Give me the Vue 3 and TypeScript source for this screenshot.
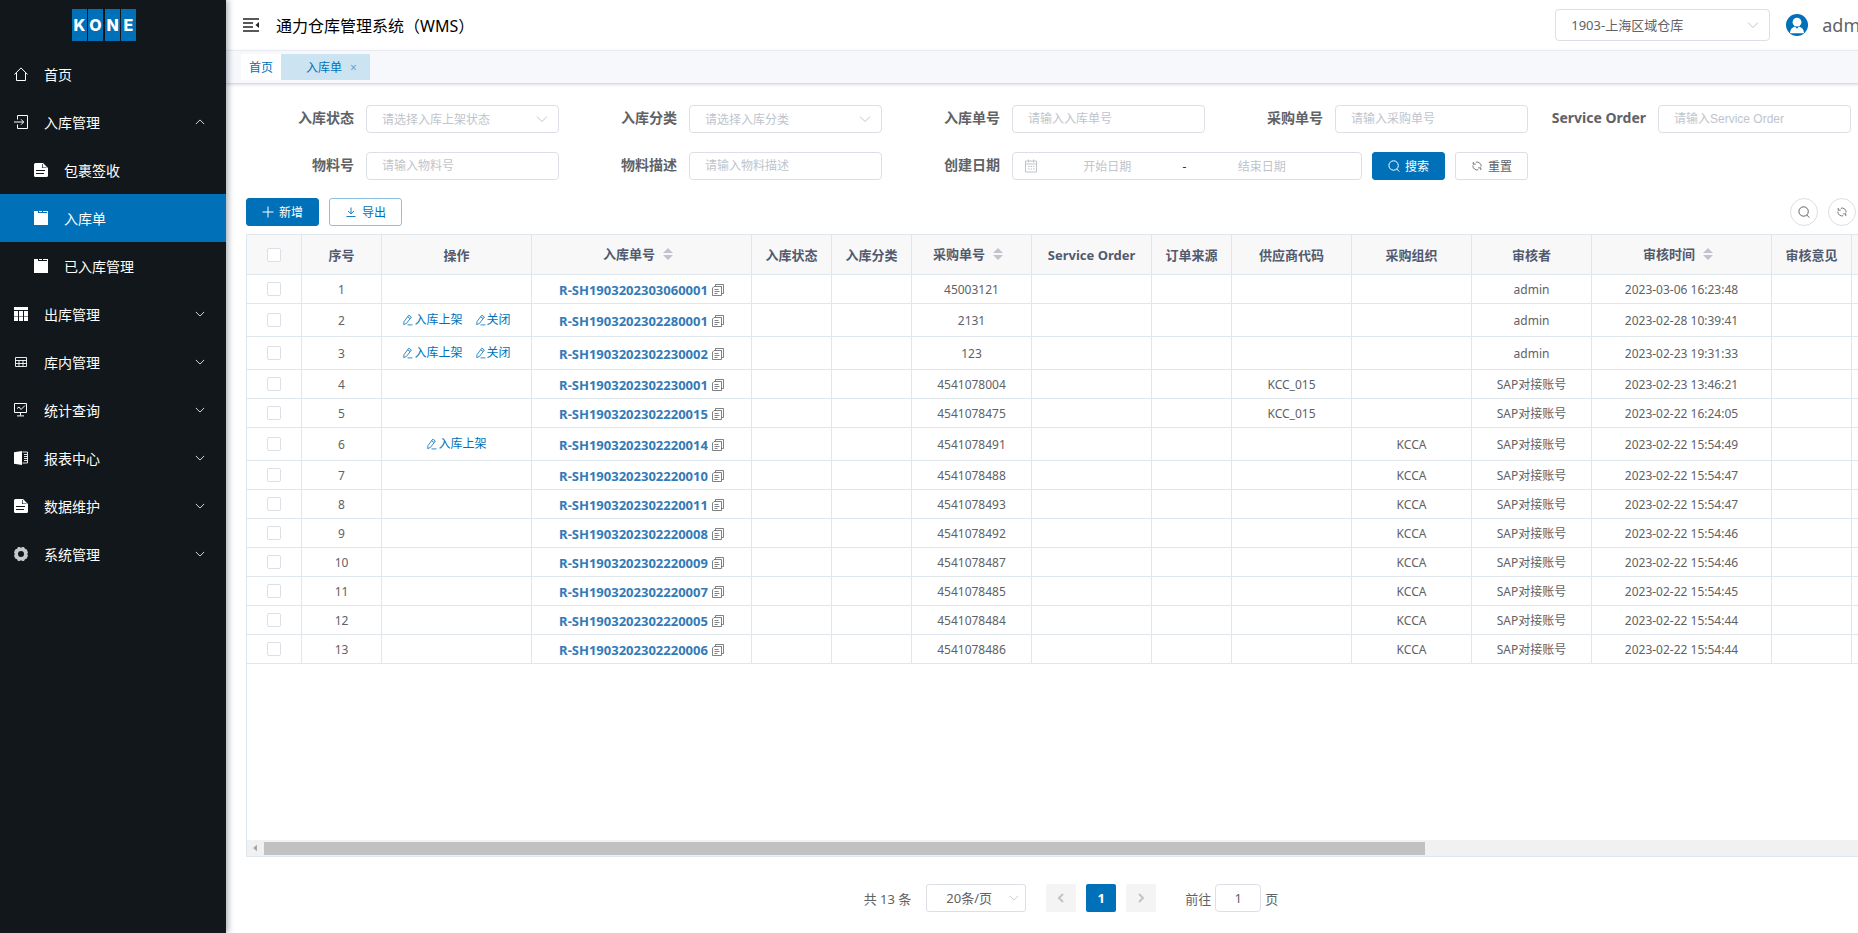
<script setup lang="ts">
import { ref } from 'vue'

interface Row {
  id: number
  actions: string[]
  receipt: string
  purchase: string
  supplier: string
  org: string
  auditor: string
  time: string
}

interface Column {
  label: string
  width: number
  sortable?: boolean
}

const sap = 'SAP对接账号'

const makeRow = (
  id: number, receipt: string, purchase: string, time: string,
  auditor: string, org = '', supplier = '', actions: string[] = []
): Row => ({ id, actions, receipt, purchase, supplier, org, auditor, time })

const rows: Row[] = [
  makeRow(1, 'R-SH1903202303060001', '45003121', '2023-03-06 16:23:48', 'admin'),
  makeRow(2, 'R-SH1903202302280001', '2131', '2023-02-28 10:39:41', 'admin', '', '', ['入库上架', '关闭']),
  makeRow(3, 'R-SH1903202302230002', '123', '2023-02-23 19:31:33', 'admin', '', '', ['入库上架', '关闭']),
  makeRow(4, 'R-SH1903202302230001', '4541078004', '2023-02-23 13:46:21', sap, '', 'KCC_015'),
  makeRow(5, 'R-SH1903202302220015', '4541078475', '2023-02-22 16:24:05', sap, '', 'KCC_015'),
  makeRow(6, 'R-SH1903202302220014', '4541078491', '2023-02-22 15:54:49', sap, 'KCCA', '', ['入库上架']),
  makeRow(7, 'R-SH1903202302220010', '4541078488', '2023-02-22 15:54:47', sap, 'KCCA'),
  makeRow(8, 'R-SH1903202302220011', '4541078493', '2023-02-22 15:54:47', sap, 'KCCA'),
  makeRow(9, 'R-SH1903202302220008', '4541078492', '2023-02-22 15:54:46', sap, 'KCCA'),
  makeRow(10, 'R-SH1903202302220009', '4541078487', '2023-02-22 15:54:46', sap, 'KCCA'),
  makeRow(11, 'R-SH1903202302220007', '4541078485', '2023-02-22 15:54:45', sap, 'KCCA'),
  makeRow(12, 'R-SH1903202302220005', '4541078484', '2023-02-22 15:54:44', sap, 'KCCA'),
  makeRow(13, 'R-SH1903202302220006', '4541078486', '2023-02-22 15:54:44', sap, 'KCCA')
]

const columns: Column[] = [
  { label: '序号', width: 80 },
  { label: '操作', width: 150 },
  { label: '入库单号', width: 220, sortable: true },
  { label: '入库状态', width: 80 },
  { label: '入库分类', width: 80 },
  { label: '采购单号', width: 120, sortable: true },
  { label: 'Service Order', width: 120 },
  { label: '订单来源', width: 80 },
  { label: '供应商代码', width: 120 },
  { label: '采购组织', width: 120 },
  { label: '审核者', width: 120 },
  { label: '审核时间', width: 180, sortable: true },
  { label: '审核意见', width: 80 },
  { label: '', width: 120 }
]

const filters = [
  { id: 'status', label: '入库状态', hint: '请选择入库上架状态', select: true },
  { id: 'category', label: '入库分类', hint: '请选择入库分类', select: true },
  { id: 'receipt', label: '入库单号', hint: '请输入入库单号', select: false },
  { id: 'purchase', label: '采购单号', hint: '请输入采购单号', select: false },
  { id: 'service', label: 'Service Order', hint: '请输入Service Order', select: false },
  { id: 'material', label: '物料号', hint: '请输入物料号', select: false },
  { id: 'description', label: '物料描述', hint: '请输入物料描述', select: false }
]

const children = [
  { label: '包裹签收', icon: 'document' },
  { label: '入库单', icon: 'board' },
  { label: '已入库管理', icon: 'board' }
]

const groups = [
  { label: '出库管理', icon: 'grid' },
  { label: '库内管理', icon: 'sheet' },
  { label: '统计查询', icon: 'chart' },
  { label: '报表中心', icon: 'book' },
  { label: '数据维护', icon: 'document' },
  { label: '系统管理', icon: 'gear' }
]

const activeChild = ref('入库单')
const inboundOpen = ref(true)
const selected = ref<number[]>([])
const jumpPage = ref('1')

function toggleAll(event: Event): void {
  selected.value = (event.target as HTMLInputElement).checked ? rows.map((r) => r.id) : []
}
</script>

<template>
  <svg class="sprite" aria-hidden="true">
    <symbol id="home" viewBox="0 0 14 14"><path d="M.4 7.500 7 .9l6.600 6.600M2.500 6v7.500h9V6" fill="none" stroke="currentColor" /></symbol>
    <symbol id="enter" viewBox="0 0 14 14"><path d="M3.500 4.500v-4h10v13h-10v-4M0 7h9.500M7 4.300 9.700 7 7 9.700" fill="none" stroke="currentColor" /></symbol>
    <symbol id="document" viewBox="0 0 14 14">
      <path fill-rule="evenodd" d="M1.500 0H9l5 5v7.500a1.500 1.500 0 0 1-1.500 1.500h-11A1.500 1.500 0 0 1 0 12.500v-11A1.500 1.500 0 0 1 1.500 0zM8 1v4h4.500v-.6H8.700V1zM2 7v1h9V7zM2 10v1h8v-1z" fill="currentColor" />
    </symbol>
    <symbol id="board" viewBox="0 0 14 14"><path d="M0 0h4v2h10v12H0zM5 0h3v1H5zM9 0h4v1H9zM13 0h1v3h-1z" fill="currentColor" /></symbol>
    <symbol id="grid" viewBox="0 0 14 14"><path d="M0 0h14v3H0zM0 4h4v5H0zM5 4h4v5H5zM10 4h4v5h-4zM0 9.500h4V14H0zM5 9.500h4V14H5zM10 9.500h4V14h-4z" fill="currentColor" /></symbol>
    <symbol id="sheet" viewBox="0 0 14 14"><path d="M1.500 2.500h11v9h-11zM1.500 5.500h11M1.500 8.500h11M5 5.500v6M9 5.500v6" fill="none" stroke="currentColor" stroke-width=".9" /></symbol>
    <symbol id="chart" viewBox="0 0 14 14"><path d="M.5.5h12v9H.5zM6.500 9.500v3M3 12.900h7M3 5.500 5 4l2 2.500 4-4" fill="none" stroke="currentColor" /></symbol>
    <symbol id="book" viewBox="0 0 14 14"><path d="M0 1.200 8 0v14L0 12.800z" fill="currentColor" /><path d="M8.500 1h5v11h-5M10 3.500h3.500M10 5.500h3.500M10 7.500h3.500M10 9.500h3.500" fill="none" stroke="currentColor" stroke-width=".9" /></symbol>
    <symbol id="gear" viewBox="0 0 14 14"><path fill-rule="evenodd" d="M4 0h1.500L7 .8 8.500 0H10l1 1.800 1.800.6L14 5.500 13.200 7l.8 1.500-1.200 3.100-1.800.6L10 14H8.500L7 13.200 5.500 14H4l-1-1.800-1.800-.6L0 8.500.8 7 0 5.500l1.200-3.100L3 1.800zM7 4a3 3 0 1 0 0 6 3 3 0 0 0 0-6z" fill="#c6c8c9" /></symbol>
    <symbol id="chevron" viewBox="0 0 12 12"><path d="M1 3.500 6 8.500l5-5" fill="none" stroke="currentColor" /></symbol>
    <symbol id="fold" viewBox="0 0 16 14"><path d="M0 1h16M0 5h10M0 9h10M0 13h16" stroke="currentColor" stroke-width="1.300" /><path d="M16 4v6l-3.500-3z" fill="currentColor" /></symbol>
    <symbol id="search" viewBox="0 0 12 12"><circle cx="5.600" cy="5.500" r="4.700" fill="none" stroke="currentColor" /><path d="M8.800 9 11.300 11.600" stroke="currentColor" /></symbol>
    <symbol id="refresh" viewBox="-1 -1 14 14"><path d="M1.600 4.200V1.300M1.600 3.800h3M4.600 1.600a4.800 4.800 0 0 1 6.200 5M10.400 7.800v2.900M10.400 8.200h-3M7.400 10.400a4.800 4.800 0 0 1-6.200-5" fill="none" stroke="currentColor" /></symbol>
    <symbol id="plus" viewBox="0 0 12 12"><path d="M6 .5v11M.5 6h11" stroke="currentColor" /></symbol>
    <symbol id="download" viewBox="0 0 12 12"><path d="M6 1.500v6M3 5l3 2.800L9 5M1.500 10.500h9" fill="none" stroke="currentColor" stroke-width=".9" /></symbol>
    <symbol id="edit" viewBox="0 0 12 12"><path d="M1.700 10.600 2 7.600 6.800 1.200 9.400 3 4.500 9.400zM5.600 2.800 8.200 4.600M5.500 10.900h5" fill="none" stroke="currentColor" stroke-width=".8" /></symbol>
    <symbol id="copy" viewBox="0 0 12 12"><path d="M3.500 2.500v-2h8v9h-2M.5 4 2 2.500h7.500v9h-9zM2.500 5.500h4M2.500 7.500h5M2.500 9.500h3" fill="none" stroke="currentColor" stroke-width=".8" /></symbol>
    <symbol id="calendar" viewBox="0 0 14 14"><path d="M1.500 2h11v11h-11zM1.500 5h11M4.500.5v3M9.500.5v3M4 7.500h1.500M6.500 7.500H8M9 7.500h1.500M4 10h1.500M6.500 10H8M9 10h1.500" fill="none" stroke="currentColor" /></symbol>
    <symbol id="user" viewBox="0 0 22 22">
      <circle cx="11" cy="11" r="11" fill="#0071b9" />
      <circle cx="11" cy="8.200" r="4.400" fill="#fff" />
      <path d="M4 19.200c0-3.400 2-5.800 5-6.600l2 2.200 2-2.200c3 .8 5 3.200 5 6.600z" fill="#fff" />
    </symbol>
  </svg>

  <div class="viewport">
    <div class="layout">
      <aside class="sidebar">
        <div class="logo"><span>K</span><span>O</span><span>N</span><span>E</span></div>
        <nav>
          <a class="item" href="#"><svg class="glyph"><use href="#home" /></svg><span>首页</span></a>
          <button class="item" type="button" :aria-expanded="inboundOpen" @click="inboundOpen = !inboundOpen">
            <svg class="glyph"><use href="#enter" /></svg><span>入库管理</span>
            <svg class="arrow" :class="{ up: inboundOpen }"><use href="#chevron" /></svg>
          </button>
          <template v-if="inboundOpen">
            <a
              v-for="child in children" :key="child.label" href="#" class="item child"
              :class="{ active: child.label === activeChild }" @click.prevent="activeChild = child.label"
            >
              <svg class="glyph"><use :href="'#' + child.icon" /></svg><span>{{ child.label }}</span>
            </a>
          </template>
          <button v-for="group in groups" :key="group.label" class="item" type="button">
            <svg class="glyph"><use :href="'#' + group.icon" /></svg><span>{{ group.label }}</span>
            <svg class="arrow"><use href="#chevron" /></svg>
          </button>
        </nav>
      </aside>

      <div class="main">
        <header class="topbar">
          <button class="fold" type="button" aria-label="折叠菜单"><svg><use href="#fold" /></svg></button>
          <h1>通力仓库管理系统（WMS）</h1>
          <div class="picker warehouse">
            <select aria-label="仓库"><option>1903-上海区域仓库</option></select>
            <svg><use href="#chevron" /></svg>
          </div>
          <svg class="avatar"><use href="#user" /></svg>
          <span class="account">admin</span>
        </header>

        <div class="tabs">
          <a class="tab" href="#">首页</a>
          <div class="tab current"><a href="#">入库单</a><button type="button" aria-label="关闭标签">×</button></div>
        </div>

        <main class="content">
          <form class="filters" @submit.prevent>
            <div v-for="f in filters" :key="f.id" class="field">
              <label :for="f.id">{{ f.label }}</label>
              <div v-if="f.select" class="picker">
                <select :id="f.id" class="empty"><option>{{ f.hint }}</option></select>
                <svg><use href="#chevron" /></svg>
              </div>
              <input v-else :id="f.id" class="text" type="text" :placeholder="f.hint">
            </div>
            <div class="field dates">
              <label for="start">创建日期</label>
              <div class="range">
                <svg><use href="#calendar" /></svg>
                <input id="start" type="text" placeholder="开始日期">
                <span>-</span>
                <input type="text" aria-label="结束日期" placeholder="结束日期">
              </div>
            </div>
            <button class="btn primary" type="submit"><svg><use href="#search" /></svg>搜索</button>
            <button class="btn" type="reset"><svg><use href="#refresh" /></svg>重置</button>
          </form>

          <div class="toolbar">
            <button class="btn primary" type="button"><svg><use href="#plus" /></svg>新增</button>
            <button class="btn outline" type="button"><svg><use href="#download" /></svg>导出</button>
            <div class="rounds">
              <button class="round" type="button" aria-label="搜索"><svg><use href="#search" /></svg></button>
              <button class="round" type="button" aria-label="刷新"><svg><use href="#refresh" /></svg></button>
              <button class="round" type="button" aria-label="列设置"><svg><use href="#sheet" /></svg></button>
            </div>
          </div>

          <div class="grid">
            <div class="sheet">
              <table>
                <colgroup>
                  <col class="tick">
                  <col v-for="(c, i) in columns" :key="i" :style="{ width: c.width + 'px' }">
                </colgroup>
                <thead>
                  <tr>
                    <th><input type="checkbox" aria-label="全选" :checked="selected.length === rows.length" @change="toggleAll"></th>
                    <th v-for="(c, i) in columns" :key="i">
                      <span class="head" :class="{ sortable: c.sortable }">{{ c.label }}<svg v-if="c.sortable" viewBox="0 0 10 12"><path d="M5 0l5 5H0zM0 7h10l-5 5z" fill="#c0c4cc" /></svg></span>
                    </th>
                  </tr>
                </thead>
                <tbody>
                  <tr v-for="row in rows" :key="row.id" :class="{ tall: row.actions.length }">
                    <td class="centered"><input v-model="selected" type="checkbox" :value="row.id" :aria-label="'选择 ' + row.receipt"></td>
                    <td>{{ row.id }}</td>
                    <td class="centered">
                      <div class="actions">
                        <button v-for="a in row.actions" :key="a" type="button"><svg><use href="#edit" /></svg>{{ a }}</button>
                      </div>
                    </td>
                    <td>
                      <div class="receipt">
                        <a href="#">{{ row.receipt }}</a>
                        <button type="button" aria-label="复制"><svg><use href="#copy" /></svg></button>
                      </div>
                    </td>
                    <td></td>
                    <td></td>
                    <td>{{ row.purchase }}</td>
                    <td></td>
                    <td></td>
                    <td>{{ row.supplier }}</td>
                    <td>{{ row.org }}</td>
                    <td>{{ row.auditor }}</td>
                    <td>{{ row.time }}</td>
                    <td></td>
                    <td></td>
                  </tr>
                </tbody>
              </table>
            </div>
            <div class="scroll">
              <svg class="step" viewBox="0 0 17 17"><path d="M10 5v7L6 8.500z" fill="#a3a3a3" /></svg>
              <div class="track"><div class="thumb"></div></div>
              <svg class="step" viewBox="0 0 17 17"><path d="M7 5v7l4-3.500z" fill="#505050" /></svg>
            </div>
          </div>

          <footer class="pager">
            <span class="total">共 13 条</span>
            <div class="picker size">
              <select aria-label="每页条数"><option>20条/页</option></select>
              <svg><use href="#chevron" /></svg>
            </div>
            <div class="pages">
              <button type="button" aria-label="上一页" disabled><svg viewBox="0 0 12 12"><path d="M8 2 4 6l4 4" /></svg></button>
              <button type="button" class="on">1</button>
              <button type="button" aria-label="下一页" disabled><svg viewBox="0 0 12 12"><path d="m4 2 4 4-4 4" /></svg></button>
            </div>
            <label class="jump">前往<input v-model="jumpPage" type="text">页</label>
          </footer>
        </main>
      </div>
    </div>
  </div>
</template>

<style>
body {
  margin: 0;
  background: #fff;
}
</style>

<style scoped>
* {
  box-sizing: border-box;
}

.sprite {
  position: absolute;
  width: 0;
  height: 0;
}

.viewport {
  overflow: hidden;
  font-family: "Noto Sans", "Noto Sans CJK SC", sans-serif;
  font-size: 12px;
  color: #606266;
}

.layout {
  display: flex;
  min-width: 1914px;
  height: 100vh;
}

button,
input,
select {
  margin: 0;
  padding: 0;
  border: 0;
  background: none;
  color: inherit;
  font: inherit;
  outline: none;
}

button {
  cursor: pointer;
}

a {
  color: inherit;
  text-decoration: none;
}

input::placeholder {
  color: #c0c4cc;
  opacity: 1;
}

/* Sidebar */
.sidebar {
  position: relative;
  z-index: 2;
  flex: none;
  width: 226px;
  background: #11171a;
  color: #fff;
  box-shadow: 2px 0 6px rgba(0, 21, 41, 0.35);
}

.logo {
  display: flex;
  gap: 1px;
  height: 50px;
  padding: 9px 0 9px 72px;
}

.logo span {
  width: 15px;
  height: 32px;
  background: #0071b9;
  font: 800 16px/32px Inter, sans-serif;
  text-align: center;
}

.logo span:nth-child(3) {
  margin-left: 1px;
}

.item {
  display: flex;
  align-items: center;
  gap: 16px;
  width: 100%;
  height: 48px;
  padding: 0 21px 0 14px;
  font-size: 14px;
}

.item.child {
  padding-left: 34px;
}

.item.active {
  background: #0071b9;
}

.glyph {
  width: 14px;
  height: 14px;
}

.arrow {
  width: 10px;
  height: 10px;
  margin-left: auto;
}

.arrow.up {
  transform: rotate(180deg);
}

/* Header */
.main {
  display: flex;
  flex: 1;
  flex-direction: column;
  min-width: 0;
}

.topbar {
  display: flex;
  align-items: center;
  flex: none;
  height: 50px;
  padding: 0 38px 0 17px;
}

.fold {
  width: 16px;
  height: 14px;
  color: #222;
}

.fold svg {
  display: block;
  width: 16px;
  height: 14px;
}

h1 {
  margin: 0 auto 0 17px;
  color: #000;
  font-size: 16px;
  font-weight: 400;
}

.picker {
  position: relative;
  width: 193px;
}

.picker select {
  display: block;
  width: 100%;
  height: 28px;
  padding: 0 30px 0 15px;
  border: 1px solid #dcdfe6;
  border-radius: 4px;
  background: #fff;
  appearance: none;
}

.picker select.empty {
  color: #c0c4cc;
}

.picker svg {
  position: absolute;
  top: 50%;
  right: 11px;
  width: 12px;
  height: 12px;
  margin-top: -6px;
  color: #c0c4cc;
  pointer-events: none;
}

.picker.warehouse {
  width: 215px;
  margin-right: 16px;
  font-size: 13px;
}

.picker.warehouse select {
  height: 32px;
}

.avatar {
  width: 22px;
  height: 22px;
  margin-right: 14px;
}

.account {
  font-size: 18px;
}

.tabs {
  display: flex;
  flex: none;
  height: 34px;
  padding: 3px 15px;
  border-top: 1px solid #e8ebf1;
  border-bottom: 1px solid #d8dce5;
  background: #f6f8fc;
  box-shadow: 0 1px 3px rgba(0, 0, 0, 0.12);
}

.tab {
  height: 26px;
  padding: 0 8px;
  background: #fff;
  color: #0071b9;
  line-height: 27px;
}

.tab.current {
  display: flex;
  gap: 8px;
  padding: 0 13px 0 25px;
  background: #cce3f1;
}

.tab button {
  color: #6ba5cb;
  line-height: 27px;
}

/* Filters */
.content {
  display: flex;
  flex: 1;
  flex-direction: column;
  min-height: 0;
  padding: 21px 20px 20px;
}

.filters {
  display: flex;
  flex-wrap: wrap;
  gap: 19px 10px;
}

.field {
  display: flex;
  width: 313px;
}

.field.dates {
  width: 470px;
}

.field label {
  width: 120px;
  padding-right: 12px;
  font-size: 14px;
  font-weight: 700;
  line-height: 26px;
  text-align: right;
  white-space: nowrap;
}

.text {
  width: 193px;
  height: 28px;
  padding: 0 15px;
  border: 1px solid #dcdfe6;
  border-radius: 4px;
  font-family: "Liberation Sans", "Noto Sans CJK SC", sans-serif;
}

.range {
  display: flex;
  align-items: center;
  width: 350px;
  height: 28px;
  padding: 0 30px 0 11px;
  border: 1px solid #dcdfe6;
  border-radius: 4px;
}

.range svg {
  flex: none;
  width: 14px;
  height: 14px;
  color: #c0c4cc;
}

.range input {
  flex: 1;
  min-width: 0;
  text-align: center;
}

.range span {
  width: 16px;
  color: #303133;
  text-align: center;
}

.btn {
  display: inline-flex;
  align-items: center;
  justify-content: center;
  gap: 5px;
  width: 73px;
  height: 28px;
  border: 1px solid #dcdfe6;
  border-radius: 3px;
}

.btn svg,
.round svg {
  width: 12px;
  height: 12px;
}

.btn.primary {
  border-color: #0071b9;
  background: #0071b9;
  color: #fff;
}

.btn.outline {
  border-color: #8cc0e0;
  color: #0071b9;
}

.toolbar {
  display: flex;
  gap: 10px;
  margin: 18px 0 8px;
}

.rounds {
  display: flex;
  gap: 10px;
  margin-left: auto;
}

.round {
  display: flex;
  align-items: center;
  justify-content: center;
  width: 28px;
  height: 28px;
  border: 1px solid #dcdfe6;
  border-radius: 50%;
}

/* Table */
.grid {
  display: flex;
  flex: 1;
  flex-direction: column;
  min-height: 0;
  border: 1px solid #dfe6ec;
}

.sheet {
  flex: 1;
  min-height: 0;
  overflow: hidden;
}

table {
  width: 1725px;
  border-spacing: 0;
  table-layout: fixed;
}

.tick {
  width: 55px;
}

th,
td {
  height: 29px;
  padding: 0;
  border-right: 1px solid #dfe6ec;
  border-bottom: 1px solid #dfe6ec;
  line-height: 20px;
  text-align: center;
  white-space: nowrap;
}

td {
  padding-top: 2px;
}

td.centered {
  padding-top: 0;
}

th {
  height: 40px;
  background: #f8f8f9;
  color: #515a6e;
  font-size: 13px;
  font-weight: 700;
}

.tall td {
  height: 33px;
}

.head {
  display: flex;
  align-items: center;
  justify-content: center;
  gap: 8px;
}

.head.sortable {
  padding: 0 7px 2px 0;
}

.head svg {
  width: 10px;
  height: 12px;
}

input[type="checkbox"] {
  display: block;
  width: 14px;
  height: 14px;
  margin: 0 auto;
  border: 1px solid #dcdfe6;
  border-radius: 2px;
  background: #fff;
  appearance: none;
}

input[type="checkbox"]:checked {
  border-color: #0071b9;
  background: #0071b9;
}

.actions,
.receipt {
  display: flex;
  align-items: center;
  justify-content: center;
}

.actions {
  gap: 12px;
}

.actions button {
  display: flex;
  align-items: center;
  color: #0071b9;
}

.actions svg {
  width: 12px;
  height: 12px;
}

.receipt {
  gap: 4px;
}

.receipt a {
  color: #337ab7;
  font-size: 13px;
  font-weight: 700;
}

.receipt svg {
  display: block;
  width: 12px;
  height: 12px;
}

.scroll {
  display: flex;
  height: 16px;
  background: #f1f1f1;
}

.step {
  width: 17px;
  height: 16px;
}

.track {
  flex: 1;
  padding: 2px 0 1px;
}

.thumb {
  width: 72%;
  height: 13px;
  background: #c1c1c1;
}

/* Pagination */
.pager {
  display: flex;
  align-items: center;
  justify-content: center;
  margin-top: 27px;
  padding: 0 0 1px 2px;
  font-size: 13px;
}

.picker.size {
  width: 100px;
  margin: 0 20px 0 15px;
}

.picker.size select {
  padding: 0 24px 0 19px;
  border-radius: 3px;
}

.picker.size svg {
  right: 7px;
  width: 10px;
}

.pages {
  display: flex;
  gap: 10px;
}

.pages button {
  display: flex;
  align-items: center;
  justify-content: center;
  width: 30px;
  height: 28px;
  border-radius: 2px;
  background: #f4f4f5;
  color: #c0c4cc;
}

.pages .on {
  background: #0071b9;
  color: #fff;
  font-weight: 700;
}

.pages svg {
  width: 12px;
  height: 12px;
  fill: none;
  stroke: currentColor;
  stroke-width: 2;
}

.jump {
  display: flex;
  align-items: center;
  gap: 4px;
  margin-left: 29px;
}

.jump input {
  width: 46px;
  height: 28px;
  border: 1px solid #dcdfe6;
  border-radius: 4px;
  text-align: center;
}
</style>
